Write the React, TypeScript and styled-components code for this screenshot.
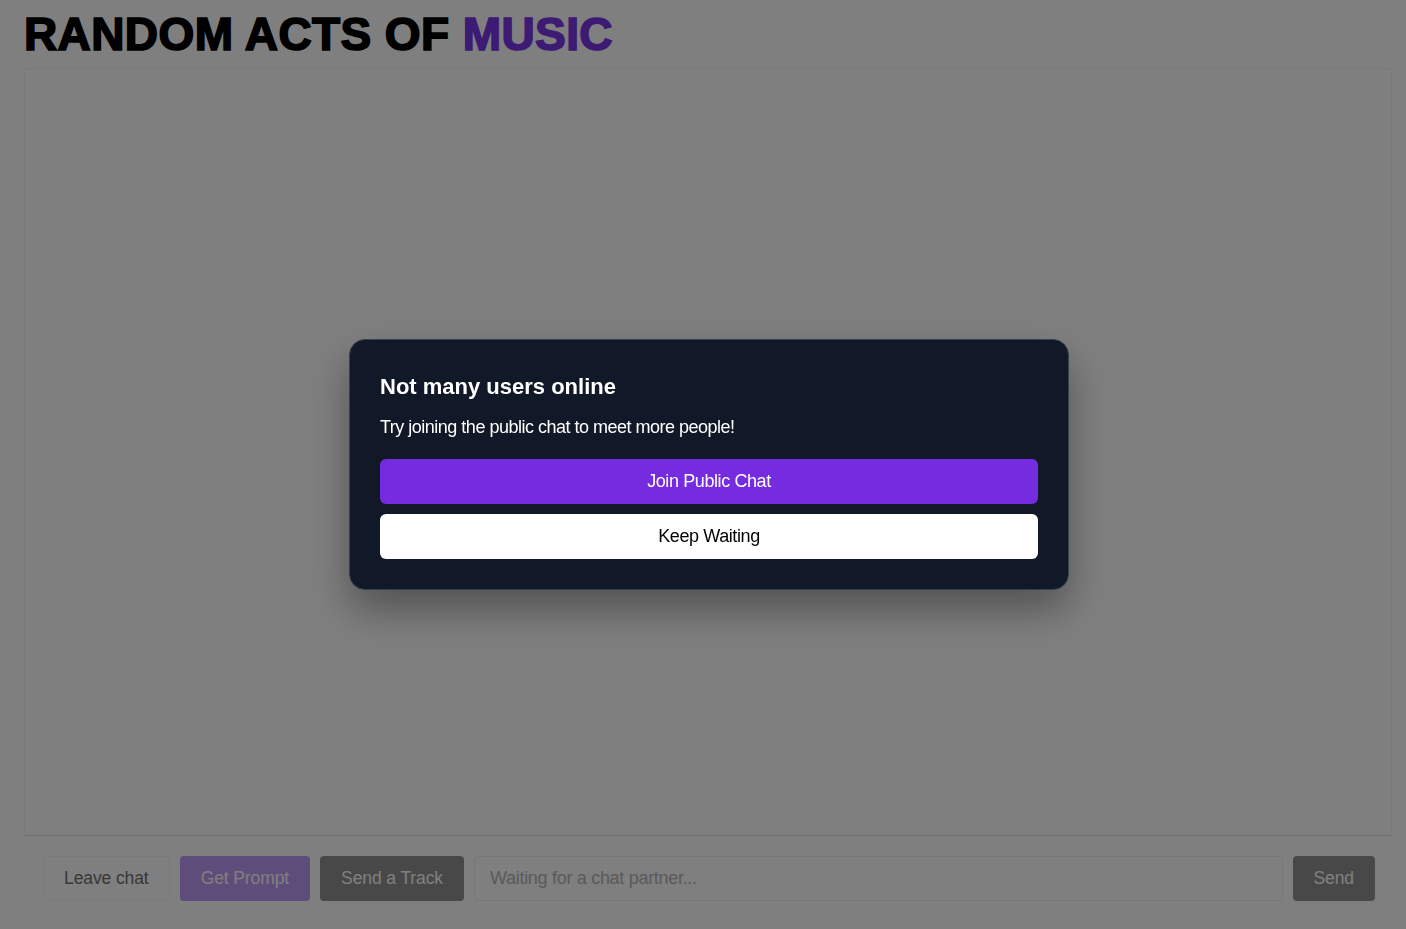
import React from 'react'
import styled, { createGlobalStyle } from 'styled-components'

const GlobalStyle = createGlobalStyle`
  html, body {
    margin: 0;
    padding: 0;
    background: #ffffff;
    font-family: 'Liberation Sans', Arial, sans-serif;
  }
  * {
    box-sizing: border-box;
  }
`

const Page = styled.div`
  height: 929px;
  padding: 10px 14px 0 24px;
  display: flex;
  flex-direction: column;
`

const Title = styled.h1`
  margin: 0;
  font-family: 'Liberation Sans', Arial, sans-serif;
  font-weight: 900;
  font-size: 46px;
  line-height: 48px;
  letter-spacing: 0.4px;
  color: #000000;
  -webkit-text-stroke: 1.7px currentColor;
`

const Accent = styled.span`
  color: #7a35e6;
`

const ChatWindow = styled.div`
  margin-top: 10px;
  flex: 1;
  display: flex;
  flex-direction: column;
`

const Messages = styled.div`
  flex: 1;
  border: 1px solid #f2f2f2;
  border-bottom: none;
`

const Controls = styled.div`
  border-top: 1px solid #dcdcdc;
  padding: 20px 17px 28px 19px;
  display: flex;
  gap: 10px;
`

const ControlButton = styled.button<{ $tone: 'plain' | 'purple' | 'dark' }>`
  height: 45px;
  padding: 0 20px;
  border-radius: 4px;
  font-family: 'Liberation Sans', Arial, sans-serif;
  font-size: 17.5px;
  letter-spacing: -0.1px;
  cursor: pointer;
  border: 1px solid ${p => (p.$tone === 'plain' ? '#f3f3f3' : 'transparent')};
  background: ${p => (p.$tone === 'plain' ? '#ffffff' : p.$tone === 'purple' ? '#7c3aed' : '#262626')};
  color: ${p => (p.$tone === 'plain' ? '#707070' : '#ffffff')};
  opacity: ${p => (p.$tone === 'plain' ? 1 : 0.5)};
  flex-shrink: 0;
`

const MessageInput = styled.input`
  flex: 1;
  height: 45px;
  padding: 0 15px;
  border: 1px solid #eeeeee;
  border-radius: 4px;
  font-family: 'Liberation Sans', Arial, sans-serif;
  font-size: 18px;
  letter-spacing: -0.3px;
  background: #ffffff;
  &::placeholder {
    color: #b4b4b4;
  }
`

const Overlay = styled.div`
  position: fixed;
  inset: 0;
  background: rgba(0, 0, 0, 0.5);
  display: flex;
  align-items: center;
  justify-content: center;
  padding-left: 12px;
`

const Dialog = styled.div`
  width: 720px;
  background: #111827;
  border: 1px solid #374151;
  border-radius: 16px;
  padding: 31px 30px 30px;
  box-shadow: 0 20px 40px rgba(0, 0, 0, 0.35);
  display: flex;
  flex-direction: column;
`

const DialogTitle = styled.h2`
  margin: 0;
  font-size: 22px;
  line-height: 32px;
  font-weight: 700;
  color: #ffffff;
`

const DialogText = styled.p`
  margin: 12px 0 20px;
  font-size: 18px;
  line-height: 24px;
  letter-spacing: -0.5px;
  color: #ffffff;
`

const DialogButton = styled.button<{ $primary?: boolean }>`
  height: 45px;
  width: 100%;
  border: none;
  border-radius: 6px;
  font-family: 'Liberation Sans', Arial, sans-serif;
  font-size: 18px;
  letter-spacing: -0.4px;
  cursor: pointer;
  background: ${p => (p.$primary ? '#752bdf' : '#ffffff')};
  color: ${p => (p.$primary ? '#ffffff' : '#000000')};
  & + & {
    margin-top: 10px;
  }
`

export default function App() {
  return (
    <>
      <GlobalStyle />
      <Page>
        <Title>
          RANDOM ACTS OF <Accent>MUSIC</Accent>
        </Title>
        <ChatWindow>
          <Messages />
          <Controls>
            <ControlButton $tone="plain">Leave chat</ControlButton>
            <ControlButton $tone="purple">Get Prompt</ControlButton>
            <ControlButton $tone="dark">Send a Track</ControlButton>
            <MessageInput placeholder="Waiting for a chat partner..." disabled />
            <ControlButton $tone="dark">Send</ControlButton>
          </Controls>
        </ChatWindow>
      </Page>
      <Overlay>
        <Dialog>
          <DialogTitle>Not many users online</DialogTitle>
          <DialogText>Try joining the public chat to meet more people!</DialogText>
          <DialogButton $primary>Join Public Chat</DialogButton>
          <DialogButton>Keep Waiting</DialogButton>
        </Dialog>
      </Overlay>
    </>
  )
}
